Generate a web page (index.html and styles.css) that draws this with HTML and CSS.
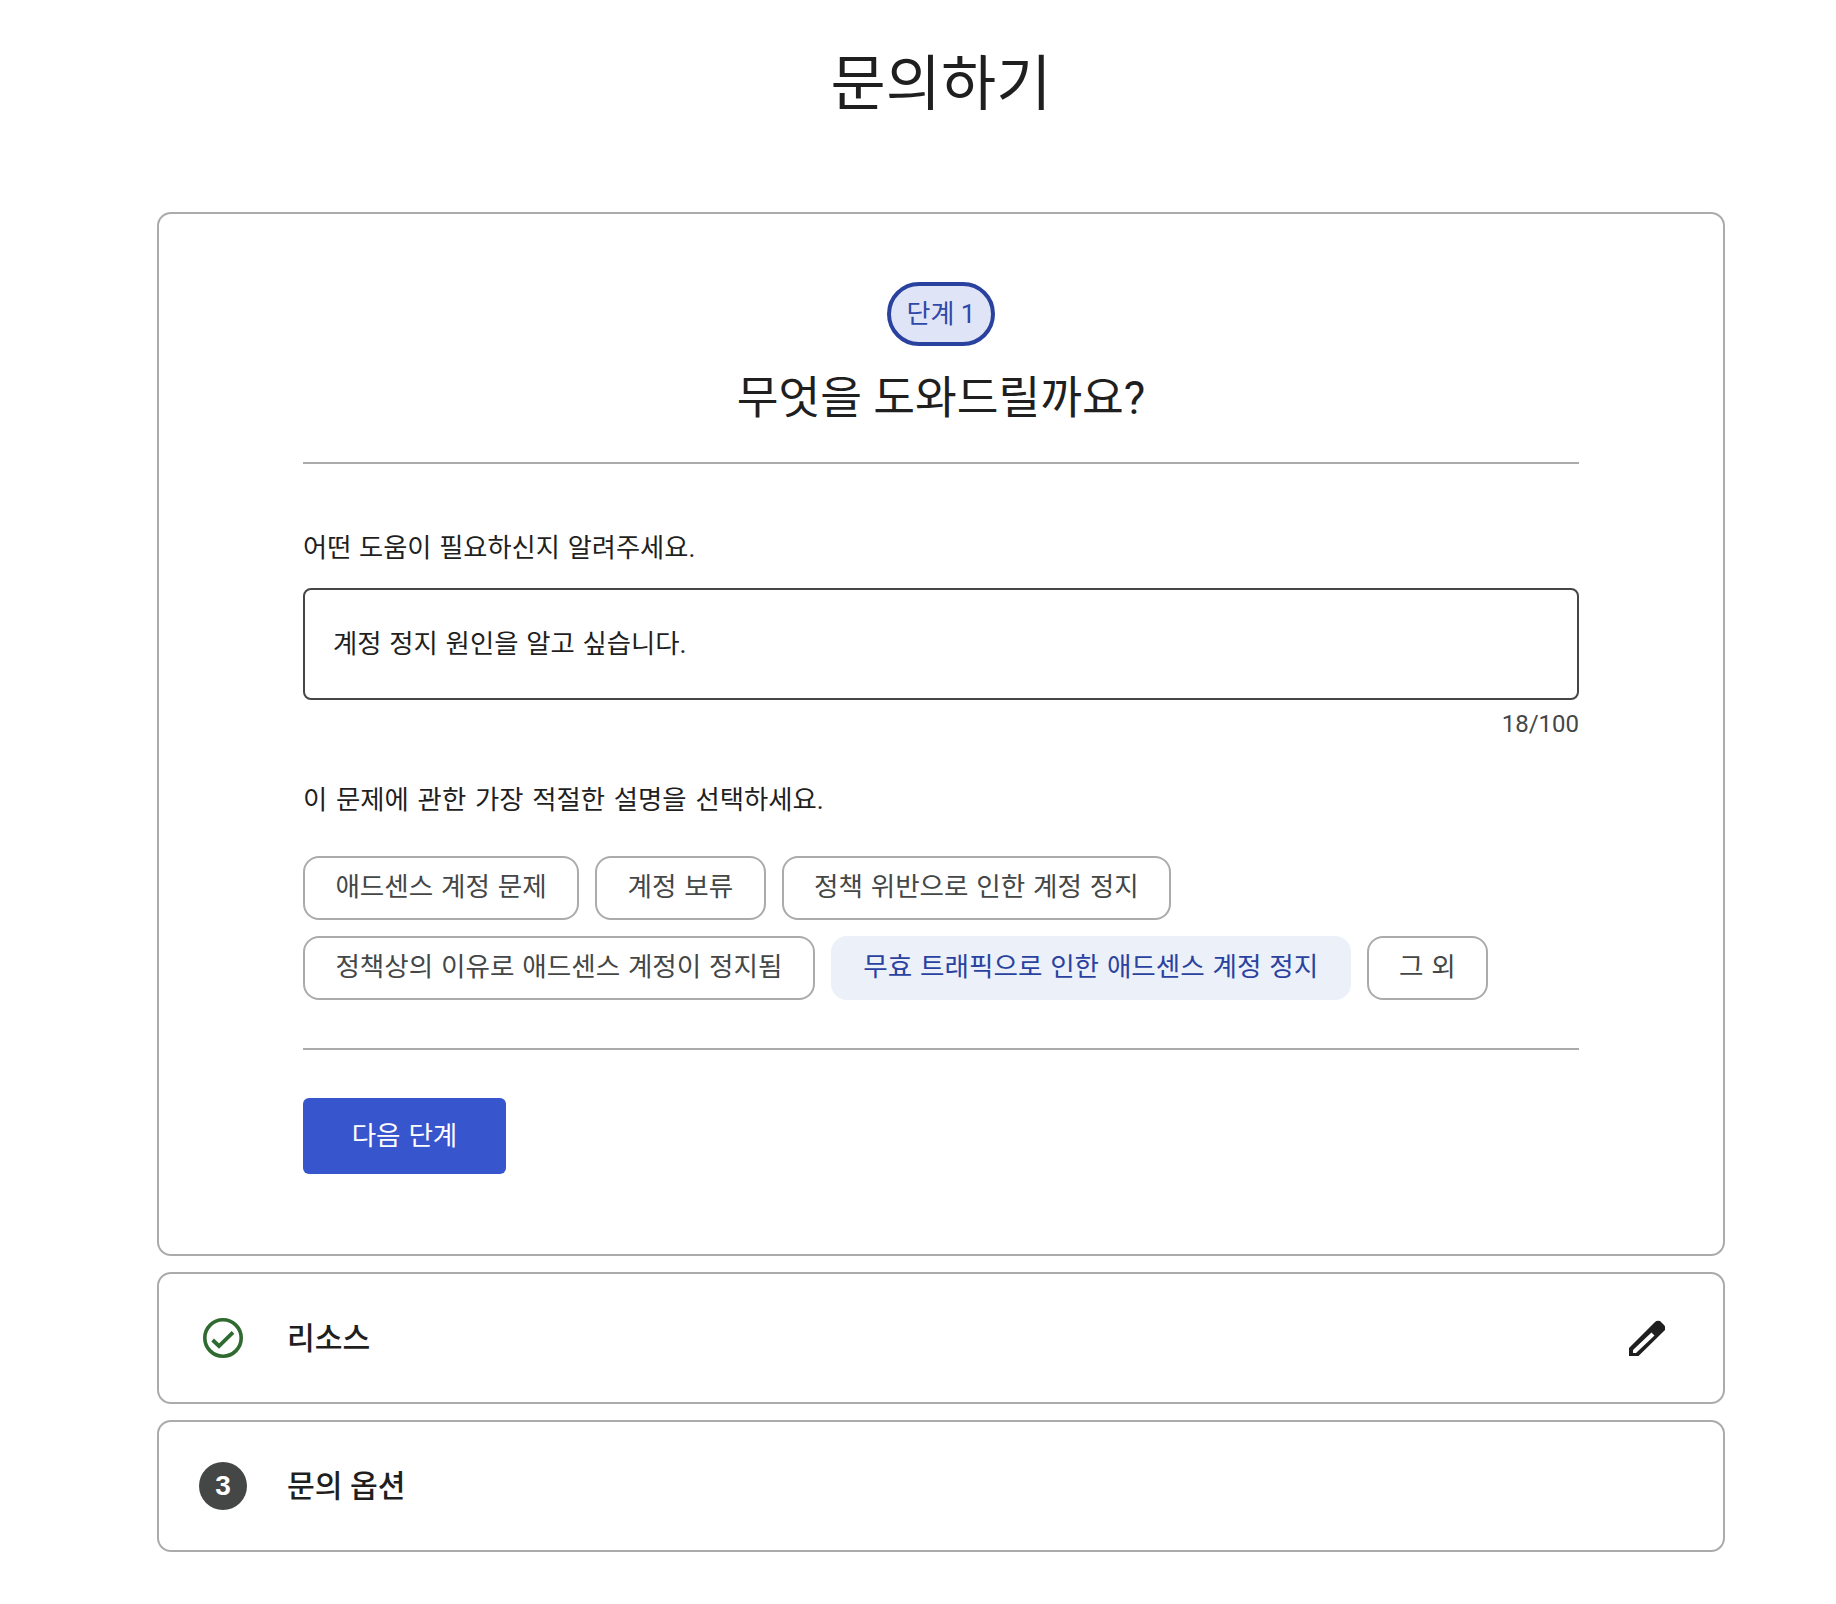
FILE: index.html
```html
<!DOCTYPE html>
<html lang="ko">
<head>
    <meta charset="UTF-8">
    <title>문의하기</title>
    <link rel="stylesheet" href="styles.css">
</head>
<body>
    <div class="page">
        <h1 class="page-title">문의하기</h1>

        <main class="steps">
            <!-- Step 1 -->
            <section class="card step-card">
                <div class="step-head">
                    <span class="step-pill">단계 1</span>
                    <h2 class="step-title">무엇을 도와드릴까요?</h2>
                </div>

                <p class="field-label">어떤 도움이 필요하신지 알려주세요.</p>
                <div class="text-box">계정 정지 원인을 알고 싶습니다.</div>
                <div class="counter">18/100</div>

                <p class="field-label chips-label">이 문제에 관한 가장 적절한 설명을 선택하세요.</p>
                <div class="chips">
                    <button class="chip">애드센스 계정 문제</button>
                    <button class="chip">계정 보류</button>
                    <button class="chip">정책 위반으로 인한 계정 정지</button>
                    <button class="chip">정책상의 이유로 애드센스 계정이 정지됨</button>
                    <button class="chip chip-selected">무효 트래픽으로 인한 애드센스 계정 정지</button>
                    <button class="chip">그 외</button>
                </div>

                <div class="step-actions">
                    <button class="next-btn">다음 단계</button>
                </div>
            </section>

            <!-- Collapsed steps -->
            <section class="card collapsed-card">
                <svg class="check-icon" viewBox="0 0 40 40" width="40" height="40">
                    <circle cx="20" cy="20" r="18.2" fill="none" stroke="#2f6b30" stroke-width="3.6"/>
                    <path d="M9.6 22L16 28L30 14.4" fill="none" stroke="#2f6b30" stroke-width="3.8"/>
                </svg>
                <span class="collapsed-title">리소스</span>
                <svg class="edit-icon" viewBox="0 0 36 36" width="36" height="36">
                    <path fill="#1f1f1f" fill-rule="evenodd" d="M0 36V28L26 2Q28 0 31 1L35 5Q37 7 36 10L9.5 36ZM4 30V33H7L25.5 15.5L22.5 12.5Z"/>
                </svg>
            </section>

            <section class="card collapsed-card">
                <span class="step-number">3</span>
                <span class="collapsed-title">문의 옵션</span>
            </section>
        </main>
    </div>
</body>
</html>
```

FILE: styles.css
```css
/* Global Styles */
body {
    margin: 0;
    background-color: #fff;
    color: #1f1f1f;
    font-family: Roboto, "Noto Sans CJK KR", sans-serif;
}

.page {
    width: 1568px;
    margin-left: 157px;
}

.page-title {
    margin: 0;
    height: 212px;
    padding-top: 43px;
    box-sizing: border-box;
    font-size: 60px;
    line-height: 84px;
    font-weight: 400;
    text-align: center;
}

/* Cards */
.steps {
    display: flex;
    flex-direction: column;
    gap: 16px;
}

.card {
    border: 2px solid #ababab;
    border-radius: 14px;
    box-sizing: border-box;
    background: #fff;
}

.step-card {
    height: 1044px;
    padding: 68px 144px 0;
}

/* Step header */
.step-head {
    display: flex;
    flex-direction: column;
    align-items: center;
    height: 180px;
    border-bottom: 2px solid #ababab;
}

.step-pill {
    width: 108px;
    height: 64px;
    box-sizing: border-box;
    border: 4px solid #2a429f;
    border-radius: 32px;
    background-color: #dfe4f6;
    color: #2f49a8;
    font-size: 26px;
    line-height: 56px;
    text-align: center;
}

.step-title {
    margin: 23px 0 0;
    font-size: 45.4px;
    line-height: 60px;
    font-weight: 400;
}

/* Form fields */
.chip,
.next-btn {
    font-size: 26.6px;
    word-spacing: 1.2px;
}

.field-label {
    margin: 66px 0 0;
    font-size: 26.25px;
    word-spacing: 1.2px;
    line-height: 36px;
}

.text-box {
    margin-top: 22px;
    height: 112px;
    box-sizing: border-box;
    border: 2px solid #444746;
    border-radius: 8px;
    padding: 0 28px;
    font-size: 26.4px;
    word-spacing: 1.2px;
    line-height: 108px;
}

.counter {
    margin-top: 7px;
    text-align: right;
    font-size: 24px;
    line-height: 34px;
    color: #444746;
}

.chips-label {
    margin-top: 41px;
    font-size: 26.4px;
    word-spacing: 2.2px;
}

.chips {
    display: flex;
    flex-wrap: wrap;
    gap: 16px;
    margin-top: 38px;
}

.chip {
    height: 64px;
    padding: 0 30.4px 7px;
    border: 2px solid #ababab;
    border-radius: 16px;
    background: #fff;
    color: #444746;
    font-family: inherit;
}

.chip-selected {
    border-color: #ecf0f9;
    background-color: #ecf0f9;
    color: #2a429f;
}

/* Next button */
.step-actions {
    margin-top: 48px;
    padding-top: 48px;
    border-top: 2px solid #ababab;
}

.next-btn {
    width: 203px;
    height: 76px;
    padding-bottom: 7px;
    border: none;
    border-radius: 6px;
    background-color: #3755cc;
    color: #fff;
    font-family: inherit;
}

/* Collapsed steps */
.collapsed-card {
    height: 132px;
    padding: 0 58px 0 40px;
    display: flex;
    align-items: center;
}

.check-icon {
    margin: 0 4px;
}

.step-number {
    width: 48px;
    height: 48px;
    border-radius: 50%;
    background-color: #444746;
    color: #fff;
    font-family: "Liberation Sans", sans-serif;
    font-size: 28px;
    font-weight: 700;
    line-height: 48px;
    text-align: center;
}

.collapsed-title {
    margin-left: 40px;
    padding-bottom: 4px;
    font-size: 30.2px;
    font-weight: 500;
    flex-grow: 1;
}
```
